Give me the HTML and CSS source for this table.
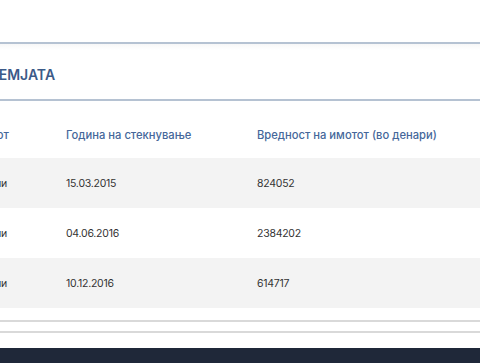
FILE: index.html
```html
<!DOCTYPE html>
<html lang="mk">
<head>
<meta charset="utf-8">
<title>Земјата</title>
<link rel="stylesheet" href="styles.css">
</head>
<body>
<div class="viewport">
  <div class="page">
    <section class="card">
      <div class="card-title">
        <h2>НЕДВИЖЕН ИМОТ – ЗЕМЈАТА</h2>
      </div>
      <table class="assets">
        <colgroup>
          <col class="c1"><col class="c2"><col class="c3">
        </colgroup>
        <thead>
          <tr>
            <th>Вид на имотот</th>
            <th>Година на стекнување</th>
            <th>Вредност на имотот (во денари)</th>
          </tr>
        </thead>
        <tbody>
          <tr><td>Земјоделски парцели</td><td>15.03.2015</td><td>824052</td></tr>
          <tr><td>Земјоделски парцели</td><td>04.06.2016</td><td>2384202</td></tr>
          <tr><td>Земјоделски парцели</td><td>10.12.2016</td><td>614717</td></tr>
        </tbody>
      </table>
      <div class="card-end"></div>
    </section>
    <div class="section-end"></div>
  </div>
  <footer class="footer"></footer>
</div>
</body>
</html>
```

FILE: styles.css
```css
html, body {
  margin: 0;
  padding: 0;
  background: #ffffff;
}

body {
  width: 480px;
  height: 363px;
  overflow: hidden;
  font-family: "Inter", "Noto Sans", sans-serif;
  color: #333333;
}

.viewport {
  width: 480px;
  height: 363px;
  overflow: hidden;
  display: flex;
  flex-direction: column;
}

.page {
  margin-left: -190px;
  width: 700px;
  padding-top: 42px;
  flex: 1;
}

.card {
  border-top: 2px solid #b5c2d2;
}

.card-title {
  height: 57px;
  box-sizing: border-box;
  padding-top: 5px;
  display: flex;
  align-items: center;
  padding-left: 35px;
  border-bottom: 2px solid #b5c2d2;
  background: linear-gradient(#f7f7f7, #ffffff 6px);
}

.card-title h2 {
  margin: 0;
  font-size: 14px;
  font-weight: 600;
  color: #3b5a88;
  white-space: nowrap;
}

.assets {
  width: 700px;
  border-collapse: collapse;
  table-layout: fixed;
}

.assets .c1 { width: 236px; }
.assets .c2 { width: 191px; }
.assets .c3 { width: auto; }

.assets th,
.assets td {
  text-align: left;
  padding: 0 0 0 20px;
  white-space: nowrap;
}

.assets th:first-child {
  text-align: right;
  padding: 11px 37px 0 0;
}

.assets td:first-child {
  text-align: right;
  padding: 0 39px 0 0;
}

.assets th {
  height: 57px;
  box-sizing: border-box;
  padding-top: 11px;
  font-size: 11.2px;
  font-weight: 500;
  color: #45679a;
}

.assets td {
  height: 50px;
  font-size: 10.5px;
  letter-spacing: -0.25px;
  color: #333333;
}

.assets tbody tr:nth-child(odd) td {
  background: #f3f3f3;
}

.card-end {
  height: 12px;
  border-bottom: 2px solid #d9d9d9;
}

.section-end {
  height: 9px;
  border-bottom: 2px solid #d9d9d9;
}

.footer {
  height: 15px;
  background: #1f2839;
  flex: none;
}
```
